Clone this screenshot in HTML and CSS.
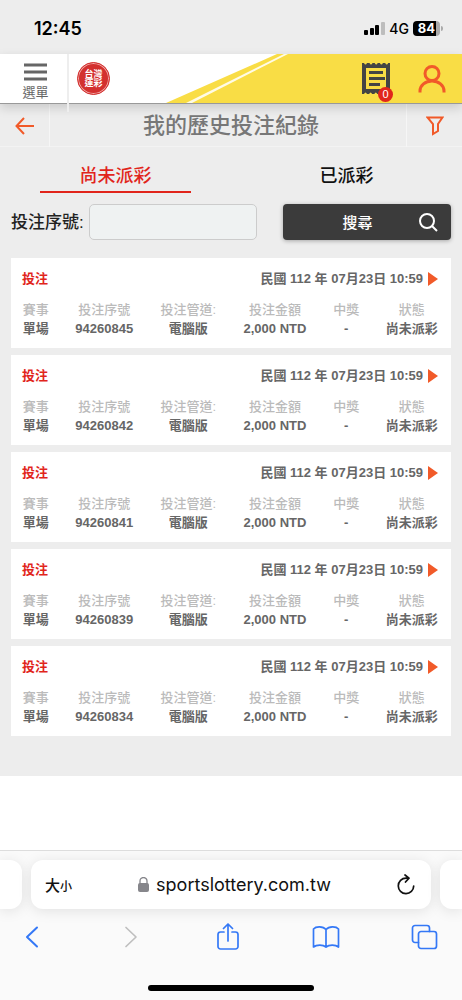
FILE: index.html
```html
<!DOCTYPE html>
<html lang="zh-Hant">
<head>
    <meta charset="UTF-8">
    <title>我的歷史投注紀錄</title>
    <meta name="viewport" content="width=device-width, initial-scale=1.0">
    <link rel="stylesheet" href="styles.css">
</head>
<body>
    <div class="status-bar">
        <span class="clock">12:45</span>
        <div class="status-icons">
            <svg width="21" height="13" viewBox="0 0 21 13">
                <rect x="0" y="8" width="4" height="5" rx="1"/>
                <rect x="6" y="6" width="4" height="7" rx="1"/>
                <rect x="11" y="3" width="4" height="10" rx="1"/>
                <rect x="17" y="0" width="4" height="13" rx="1" fill="#bdbdbd"/>
            </svg>
            <span class="network">4G</span>
            <span class="battery">84</span>
        </div>
    </div>

    <header class="site-header">
        <svg class="stripes" viewBox="0 0 462 50" preserveAspectRatio="none">
            <polygon points="166,50 277,0 462,0 462,50" fill="#f9dd45"/>
            <polygon points="186,50 284,0 288,0 192,50" fill="#fffbe6"/>
        </svg>
        <button class="menu-btn">
            <svg width="23" height="18" viewBox="0 0 23 18" stroke="#666" stroke-width="3">
                <path d="M0 2h23M0 9h23M0 16h23"/>
            </svg>
            選單
        </button>
        <a class="logo" href="#"><span>台灣運彩</span></a>
        <a class="slip" href="#">
            <svg width="28" height="32" viewBox="0 0 28 32" fill="#444">
                <path d="M0 0h2q1.500 3 3 0h2.500q1.500 3 3 0h2.200q1.500 3 3 0h2.200q1.500 3 3 0h2.300q1.500 3 3 0H28V31h-2q-1.500-3-3 0h-2.500q-1.500-3-3 0h-2.200q-1.500-3-3 0h-2.200q-1.500-3-3 0H5q-1.500-3-3 0H0ZM4 5V26H24V5Z" fill-rule="evenodd"/>
                <path d="M7 8h14v3H7zM7 14h16v3H7zM7 20h11v3H7z"/>
            </svg>
            <span class="badge">0</span>
        </a>
        <a class="account" href="#" aria-label="會員">
            <svg width="28" height="28" viewBox="0 0 28 28" fill="none" stroke="#f15a29" stroke-width="3">
                <circle cx="14" cy="8.500" r="7"/>
                <path d="M2 27.500v-1.500a12 10 0 0 1 24 0v1.500"/>
            </svg>
        </a>
    </header>

    <div class="title-bar">
        <a class="back" href="#" aria-label="返回">
            <svg width="20" height="18" viewBox="0 0 20 18" fill="none" stroke="#f15a29" stroke-width="2">
                <path d="M9 1L1.500 9L9 17M1.500 9H19"/>
            </svg>
        </a>
        <h1>我的歷史投注紀錄</h1>
        <button class="filter" aria-label="篩選">
            <svg width="18" height="20" viewBox="0 0 18 20" fill="none" stroke="#f15a29" stroke-width="2">
                <path d="M1.500 1.500h15l-4.500 6.500v7l-5 3v-10z"/>
            </svg>
        </button>
    </div>

    <main>
        <nav class="tabs">
            <a class="tab active" href="#">尚未派彩</a>
            <a class="tab" href="#">已派彩</a>
        </nav>

        <form class="search">
            <label for="serial">投注序號:</label>
            <input id="serial" type="text">
            <button type="button">
                <span>搜尋</span>
                <svg width="19" height="19" viewBox="0 0 19 19" fill="none" stroke="#fff" stroke-width="2">
                    <circle cx="8" cy="8" r="7"/>
                    <path d="M13 13l5 5"/>
                </svg>
            </button>
        </form>

        <section class="records">
            <article class="record">
                <div class="record-head">
                    <h2>投注</h2>
                    <a href="#">民國 112 年 07月23日 10:59</a>
                </div>
                <table>
                    <thead>
                        <tr><th>賽事</th><th>投注序號</th><th>投注管道:</th><th>投注金額</th><th>中獎</th><th>狀態</th></tr>
                    </thead>
                    <tbody>
                        <tr><td>單場</td><td>94260845</td><td>電腦版</td><td>2,000 NTD</td><td>-</td><td>尚未派彩</td></tr>
                    </tbody>
                </table>
            </article>

            <article class="record">
                <div class="record-head">
                    <h2>投注</h2>
                    <a href="#">民國 112 年 07月23日 10:59</a>
                </div>
                <table>
                    <thead>
                        <tr><th>賽事</th><th>投注序號</th><th>投注管道:</th><th>投注金額</th><th>中獎</th><th>狀態</th></tr>
                    </thead>
                    <tbody>
                        <tr><td>單場</td><td>94260842</td><td>電腦版</td><td>2,000 NTD</td><td>-</td><td>尚未派彩</td></tr>
                    </tbody>
                </table>
            </article>

            <article class="record">
                <div class="record-head">
                    <h2>投注</h2>
                    <a href="#">民國 112 年 07月23日 10:59</a>
                </div>
                <table>
                    <thead>
                        <tr><th>賽事</th><th>投注序號</th><th>投注管道:</th><th>投注金額</th><th>中獎</th><th>狀態</th></tr>
                    </thead>
                    <tbody>
                        <tr><td>單場</td><td>94260841</td><td>電腦版</td><td>2,000 NTD</td><td>-</td><td>尚未派彩</td></tr>
                    </tbody>
                </table>
            </article>

            <article class="record">
                <div class="record-head">
                    <h2>投注</h2>
                    <a href="#">民國 112 年 07月23日 10:59</a>
                </div>
                <table>
                    <thead>
                        <tr><th>賽事</th><th>投注序號</th><th>投注管道:</th><th>投注金額</th><th>中獎</th><th>狀態</th></tr>
                    </thead>
                    <tbody>
                        <tr><td>單場</td><td>94260839</td><td>電腦版</td><td>2,000 NTD</td><td>-</td><td>尚未派彩</td></tr>
                    </tbody>
                </table>
            </article>

            <article class="record">
                <div class="record-head">
                    <h2>投注</h2>
                    <a href="#">民國 112 年 07月23日 10:59</a>
                </div>
                <table>
                    <thead>
                        <tr><th>賽事</th><th>投注序號</th><th>投注管道:</th><th>投注金額</th><th>中獎</th><th>狀態</th></tr>
                    </thead>
                    <tbody>
                        <tr><td>單場</td><td>94260834</td><td>電腦版</td><td>2,000 NTD</td><td>-</td><td>尚未派彩</td></tr>
                    </tbody>
                </table>
            </article>
        </section>
    </main>

    <footer class="browser-bar">
        <div class="address-row">
            <div class="side-tab left"></div>
            <div class="address">
                <button class="text-size">大<small>小</small></button>
                <a class="url" href="#">
                    <svg width="11" height="15" viewBox="0 0 11 15">
                        <rect y="6" width="11" height="9" rx="2" fill="#86868b"/>
                        <path d="M2 7V4a3.500 3.500 0 0 1 7 0v3" fill="none" stroke="#86868b" stroke-width="1.300"/>
                    </svg>
                    sportslottery.com.tw
                </a>
                <button class="reload" aria-label="重新載入">
                    <svg width="18" height="21" viewBox="0 0 18 21" fill="none" stroke="#111" stroke-width="1.700" stroke-linecap="round" stroke-linejoin="round">
                        <path d="M11.500 4.200H9A7.700 7.700 0 1 0 16.700 12M8 1l4 3.200L8.500 8"/>
                    </svg>
                </button>
            </div>
            <div class="side-tab right"></div>
        </div>
        <nav class="toolbar">
            <button aria-label="上一頁">
                <svg width="28" height="28" viewBox="0 0 28 28"><path d="M19 4.500L9 14l10 9.500" stroke-width="2"/></svg>
            </button>
            <button class="disabled" aria-label="下一頁">
                <svg width="28" height="28" viewBox="0 0 28 28"><path d="M10 4.500L20 14L10 23.500"/></svg>
            </button>
            <button aria-label="分享">
                <svg width="28" height="28" viewBox="0 0 28 28"><path d="M10 9H6.500a2.500 2.500 0 0 0-2.500 2.500v12A2.500 2.500 0 0 0 6.500 26h15a2.500 2.500 0 0 0 2.500-2.500v-12A2.500 2.500 0 0 0 21.500 9H18M14 18V1M9.500 5.500L14 1L18.500 5.500"/></svg>
            </button>
            <button aria-label="書籤">
                <svg width="28" height="28" viewBox="0 0 28 28"><path d="M14 6.500v17.500M14 6.500C11 3 4 3 1.500 6v18c3-2.500 9.500-2.500 12.500 0c3-2.500 9.500-2.500 12.500 0V6C24 3 17 3 14 6.500"/></svg>
            </button>
            <button aria-label="分頁">
                <svg width="28" height="28" viewBox="0 0 28 28"><path d="M8.500 19.500H5A2.500 2.500 0 0 1 2.500 17V5A2.500 2.500 0 0 1 5 2.500h12A2.500 2.500 0 0 1 19.500 5v3.500"/><rect x="8.500" y="8.500" width="18" height="17" rx="2.500"/></svg>
            </button>
        </nav>
        <div class="home-indicator"></div>
    </footer>
</body>
</html>
```
FILE: styles.css
```css
* {
    box-sizing: border-box;
}

body {
    margin: 0;
    min-height: 100vh;
    display: flex;
    flex-direction: column;
    background: #fff;
    color: #222;
    font-family: 'Liberation Sans', 'Noto Sans CJK TC', sans-serif;
}

a {
    color: inherit;
    text-decoration: none;
}

button {
    border: none;
    background: none;
    padding: 0;
    color: inherit;
    font-family: inherit;
}

svg {
    display: block;
}

/* status bar */
.status-bar {
    height: 54px;
    padding: 2px 22px 0 34px;
    display: flex;
    align-items: center;
    justify-content: space-between;
    background: #ededed;
    color: #000;
    font-family: Inter, sans-serif;
}

.clock {
    font-size: 18px;
    font-weight: 600;
}

.status-icons {
    display: flex;
    align-items: center;
    gap: 4px;
}

.network {
    font-size: 14px;
    font-weight: 500;
}

.battery {
    position: relative;
    width: 27px;
    height: 15px;
    line-height: 15px;
    border-radius: 4px;
    background: linear-gradient(to right, #000 23px, #aaa 23px);
    color: #fff;
    font-size: 13px;
    font-weight: 700;
    text-align: center;
}

.battery::after {
    content: '';
    position: absolute;
    top: 5px;
    right: -3px;
    width: 2px;
    height: 5px;
    border-radius: 0 2px 2px 0;
    background: #aaa;
}

/* header */
.site-header {
    position: relative;
    z-index: 1;
    height: 50px;
    display: flex;
    align-items: center;
    background: #fff;
    border-bottom: 1px solid #999;
    box-shadow: 0 4px 10px rgba(0,0,0,0.15);
}

.stripes {
    position: absolute;
    top: 0;
    left: 0;
    width: 100%;
    height: 100%;
    z-index: -1;
}

.menu-btn {
    width: 69px;
    height: 58px;
    align-self: flex-start;
    padding: 9px 0 0 4px;
    display: flex;
    flex-direction: column;
    align-items: center;
    gap: 2px;
    border-right: 2px solid #eee;
    color: #666;
    font-size: 13px;
    line-height: 20px;
}

.logo {
    width: 33px;
    height: 33px;
    margin: 0 auto 0 8px;
    display: flex;
    align-items: center;
    justify-content: center;
    border: 1px solid #d3302f;
    border-radius: 50%;
    background: #d3302f;
    box-shadow: inset 0 0 0 1px #f0a8a5;
}

.logo span {
    width: 18px;
    color: #fff;
    font-size: 9px;
    font-weight: 700;
    line-height: 9px;
}

.slip {
    position: relative;
}

.badge {
    position: absolute;
    right: -3px;
    bottom: -7px;
    width: 15px;
    height: 15px;
    line-height: 15px;
    border-radius: 50%;
    background: #e1251b;
    color: #fff;
    font-size: 11px;
    text-align: center;
}

.account {
    margin: 0 16px 0 28px;
}

/* title bar */
.title-bar {
    height: 43px;
    display: grid;
    grid-template-columns: 50px 1fr 56px;
    background: #ededed;
    border-bottom: 1px solid #f3f3f3;
}

.back,
.filter {
    display: flex;
    align-items: center;
    justify-content: center;
}

.back {
    border-right: 1px solid #f6f6f6;
}

.filter {
    border-left: 1px solid #f6f6f6;
}

h1 {
    margin: 0;
    padding-left: 6px;
    color: #777;
    font-size: 22px;
    font-weight: 500;
    line-height: 43px;
    text-align: center;
}

/* content */
main {
    padding-bottom: 40px;
    background: #ededed;
}

.tabs {
    display: flex;
    padding-top: 14px;
}

.tab {
    flex: 1;
    margin: 0 40px;
    border-bottom: 2px solid transparent;
    color: #111;
    font-size: 18px;
    font-weight: 500;
    line-height: 30px;
    text-align: center;
}

.active {
    border-color: #e1251b;
    color: #e1251b;
}

.search {
    display: grid;
    grid-template-columns: auto 1fr 26px 1fr;
    align-items: center;
    padding: 11px 11px 18px;
}

.search label {
    padding: 0 5px 4px 0;
    font-size: 17px;
    font-weight: 500;
}

.search input {
    min-width: 0;
    height: 36px;
    padding: 0 8px;
    border: 1px solid #ccc;
    border-radius: 5px;
    background: #eff2f2;
    font-size: 16px;
}

.search button {
    grid-column: 4;
    height: 36px;
    padding: 0 13px;
    display: grid;
    grid-template-columns: 1fr 19px;
    align-items: center;
    border-radius: 4px;
    background: #3b3b3b;
    box-shadow: 0 1px 4px rgba(0,0,0,0.3);
    color: #fff;
    font-size: 15px;
    font-weight: 500;
}

.search button span {
    padding-bottom: 2px;
}

.records {
    padding: 0 11px;
    display: grid;
    gap: 7px;
}

.record {
    padding: 11px 12px 10px 11px;
    background: #fff;
    color: #666;
    font-size: 13px;
    font-weight: 700;
}

.record-head {
    display: flex;
    justify-content: space-between;
    margin-bottom: 11px;
    line-height: 20px;
}

.record-head h2 {
    margin: 0;
    color: #e1251b;
    font-size: 13px;
}

.record-head a {
    display: flex;
    align-items: center;
    gap: 5px;
    margin-right: 1px;
}

.record-head a::after {
    content: '';
    border-left: 10px solid #f15a29;
    border-top: 7px solid transparent;
    border-bottom: 7px solid transparent;
}

table {
    width: 100%;
    border-collapse: collapse;
    line-height: 19px;
    text-align: center;
    white-space: nowrap;
}

th,
td {
    padding: 0 12px;
}

th {
    color: #bbb;
    font-weight: 500;
}

th:first-child,
td:first-child {
    padding-left: 0;
}

th:last-child,
td:last-child {
    padding-right: 0;
}

/* browser bar */
.browser-bar {
    margin-top: auto;
    padding: 9px 0;
    border-top: 1px solid #ddd;
    background: #fafafa;
    overflow: hidden;
}

.address-row {
    display: flex;
    gap: 9px;
}

.address,
.side-tab {
    height: 49px;
    background: #fff;
    box-shadow: 0 2px 14px rgba(0,0,0,0.1);
}

.side-tab {
    width: 22px;
}

.left {
    border-radius: 0 12px 12px 0;
}

.right {
    border-radius: 12px 0 0 12px;
}

.address {
    flex: 1;
    padding: 0 16px 0 14px;
    display: flex;
    align-items: center;
    justify-content: space-between;
    border-radius: 12px;
    color: #111;
}

.text-size {
    font-size: 15px;
    font-weight: 500;
}

.text-size small {
    font-size: 12px;
}

.url {
    display: flex;
    align-items: center;
    gap: 7px;
    font-family: Inter, sans-serif;
    font-size: 18px;
}

.toolbar {
    padding: 14px 24px 0 18px;
    display: flex;
    justify-content: space-between;
}

.toolbar svg {
    fill: none;
    stroke: #3478f6;
    stroke-width: 1.7px;
    stroke-linecap: round;
    stroke-linejoin: round;
}

.toolbar .disabled svg {
    stroke: #bfbfbf;
}

.home-indicator {
    width: 166px;
    height: 6px;
    margin: 34px auto 0;
    border-radius: 3px;
    background: #000;
}
```
